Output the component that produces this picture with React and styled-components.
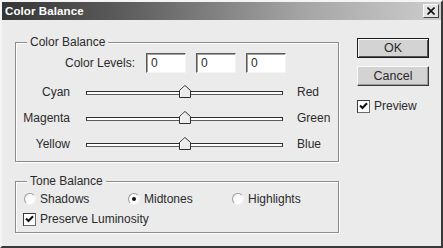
import styled, { createGlobalStyle } from "styled-components";

const GlobalStyle = createGlobalStyle`
  html, body {
    margin: 0;
    padding: 0;
    background: #ebebeb;
  }
  * {
    box-sizing: border-box;
  }
`;

const Window = styled.div`
  width: 443px;
  height: 248px;
  display: flex;
  flex-direction: column;
  background: #ebebeb;
  border: 2px solid;
  border-color: #f4f4f4 #3a3a3a #3a3a3a #f4f4f4;
  font-family: "Liberation Sans", Arial, sans-serif;
  font-size: 12px;
  color: #2a2a2a;
`;

const TitleBar = styled.div`
  height: 18px;
  flex: none;
  display: flex;
  align-items: center;
  justify-content: space-between;
  padding: 0 2px 0 3px;
  background: linear-gradient(to right, #353535 0%, #606060 30%, #a4a4a4 68%, #cdcdcd 100%);
`;

const Title = styled.span`
  color: #fff;
  font-weight: bold;
  font-size: 11.5px;
  letter-spacing: 0.1px;
`;

const CloseButton = styled.div`
  width: 16px;
  height: 14px;
  display: flex;
  align-items: center;
  justify-content: center;
  background: #e4e4e4;
  border: 1px solid;
  border-color: #fafafa #404040 #404040 #fafafa;
`;

const Body = styled.div`
  flex: 1;
  display: flex;
  padding: 18px 0 0 13px;
  gap: 18px;
`;

const LeftColumn = styled.div`
  margin-top: 4px;
  width: 324px;
  display: flex;
  flex-direction: column;
  gap: 19px;
`;

const GroupBox = styled.div`
  position: relative;
  height: ${(p) => p.$height}px;
  border: 1px solid #8c8c8c;
  box-shadow: inset 1px 1px 0 #fff, 1px 1px 0 #fff;
`;

const Legend = styled.span`
  position: absolute;
  top: -8px;
  left: 11px;
  padding: 0 3px;
  line-height: 14px;
  background: #ebebeb;
`;

const LevelsRow = styled.div`
  display: flex;
  align-items: center;
  margin-top: 10px;
  height: 20px;
`;

const LevelsLabel = styled.span`
  width: 130px;
  padding-right: 11px;
  text-align: right;
`;

const LevelInputs = styled.div`
  display: flex;
  gap: 10px;
`;

const LevelInput = styled.div`
  width: 40px;
  height: 20px;
  padding: 2px 0 0 4px;
  background: #fff;
  border: 1px solid;
  border-color: #5a5a5a #f4f4f4 #f4f4f4 #5a5a5a;
  box-shadow: inset 1px 1px 0 #a0a0a0;
  line-height: 15px;
`;

const Sliders = styled.div`
  margin-top: 6px;
  display: flex;
  flex-direction: column;
`;

const SliderRow = styled.div`
  display: grid;
  grid-template-columns: 70px 197px 1fr;
  align-items: center;
  height: 26px;
`;

const SideLabel = styled.span`
  text-align: ${(p) => (p.$left ? "right" : "left")};
  padding-right: ${(p) => (p.$left ? "16px" : "0")};
  padding-left: ${(p) => (p.$left ? "0" : "14px")};
`;

const Track = styled.div`
  position: relative;
  height: 4px;
  margin-top: 1px;
  background: #fff;
  border: 1px solid #2e2e2e;
  border-bottom-color: #5c5c5c;
`;

const Thumb = styled.svg`
  position: absolute;
  left: calc(${(p) => p.$value}% - 6px);
  top: -7px;
`;

const ToneOptions = styled.div`
  padding: 9px 0 0 8px;
  display: flex;
  flex-direction: column;
  gap: 4px;
`;

const RadioRow = styled.div`
  display: grid;
  grid-template-columns: repeat(3, 104px);
  height: 16px;
  align-items: center;
`;

const Option = styled.label`
  display: flex;
  align-items: center;
  gap: 4px;
`;

const Radio = styled.span`
  width: 12px;
  height: 12px;
  border-radius: 50%;
  background: #fdfdfd;
  border: 1px solid;
  border-color: #9a9a9a #f4f4f4 #f4f4f4 #9a9a9a;
  display: flex;
  align-items: center;
  justify-content: center;

  &::after {
    content: "";
    width: 4px;
    height: 4px;
    border-radius: 50%;
    background: ${(p) => (p.$checked ? "#111" : "transparent")};
  }
`;

const CheckRow = styled.div`
  height: 16px;
  display: flex;
  align-items: center;
  margin-left: ${(p) => p.$offset || 0}px;
  margin-top: ${(p) => p.$top || 0}px;
`;

const CheckBox = styled.span`
  width: 13px;
  height: 13px;
  background: #fff;
  border: 1px solid;
  border-color: #3a3a3a #6a6a6a #6a6a6a #3a3a3a;
  display: flex;
  align-items: center;
  justify-content: center;
`;

const RightColumn = styled.div`
  display: flex;
  flex-direction: column;
  gap: 8px;
`;

const Button = styled.div`
  width: 72px;
  height: 20px;
  display: flex;
  align-items: center;
  justify-content: center;
  background: #d3d3d3;
  border: 1px solid;
  border-color: ${(p) => (p.$default ? "#1a1a1a" : "#fafafa #3a3a3a #3a3a3a #fafafa")};
  box-shadow: ${(p) =>
    p.$default
      ? "inset 1px 1px 0 #fafafa, inset -1px -1px 0 #555"
      : "inset -1px -1px 0 #9a9a9a"};
  font-size: 12.5px;
`;

const Check = () => (
  <svg width="9" height="8" viewBox="0 0 9 8">
    <path d="M1 3.5 L3.5 6 L8 1.2" fill="none" stroke="#111" strokeWidth="2" />
  </svg>
);

const Slider = ({ left, right, value }) => (
  <SliderRow>
    <SideLabel $left>{left}</SideLabel>
    <Track>
      <Thumb $value={value} width="12" height="13" viewBox="0 0 12 13">
        <polygon points="0.5,5.5 6,0.5 11.5,5.5 11.5,12.5 0.5,12.5" fill="#ececec" stroke="#2e2e2e" />
        <polyline points="1.5,12 1.5,6 6,1.8" fill="none" stroke="#fff" />
      </Thumb>
    </Track>
    <SideLabel>{right}</SideLabel>
  </SliderRow>
);

export default function App() {
  return (
    <>
      <GlobalStyle />
      <Window>
        <TitleBar>
          <Title>Color Balance</Title>
          <CloseButton>
            <svg width="8" height="8" viewBox="0 0 8 8">
              <path d="M0.5 0.5 L7.5 7.5 M7.5 0.5 L0.5 7.5" stroke="#111" strokeWidth="1.6" />
            </svg>
          </CloseButton>
        </TitleBar>
        <Body>
          <LeftColumn>
            <GroupBox $height={120}>
              <Legend>Color Balance</Legend>
              <LevelsRow>
                <LevelsLabel>Color Levels:</LevelsLabel>
                <LevelInputs>
                  <LevelInput>0</LevelInput>
                  <LevelInput>0</LevelInput>
                  <LevelInput>0</LevelInput>
                </LevelInputs>
              </LevelsRow>
              <Sliders>
                <Slider left="Cyan" right="Red" value={50} />
                <Slider left="Magenta" right="Green" value={50} />
                <Slider left="Yellow" right="Blue" value={50} />
              </Sliders>
            </GroupBox>
            <GroupBox $height={52}>
              <Legend>Tone Balance</Legend>
              <ToneOptions>
                <RadioRow>
                  <Option>
                    <Radio />
                    Shadows
                  </Option>
                  <Option>
                    <Radio $checked />
                    Midtones
                  </Option>
                  <Option>
                    <Radio />
                    Highlights
                  </Option>
                </RadioRow>
                <CheckRow $offset={-1}>
                  <Option>
                    <CheckBox>
                      <Check />
                    </CheckBox>
                    Preserve Luminosity
                  </Option>
                </CheckRow>
              </ToneOptions>
            </GroupBox>
          </LeftColumn>
          <RightColumn>
            <Button $default>OK</Button>
            <Button>Cancel</Button>
            <CheckRow $top={4}>
              <Option>
                <CheckBox>
                  <Check />
                </CheckBox>
                Preview
              </Option>
            </CheckRow>
          </RightColumn>
        </Body>
      </Window>
    </>
  );
}
